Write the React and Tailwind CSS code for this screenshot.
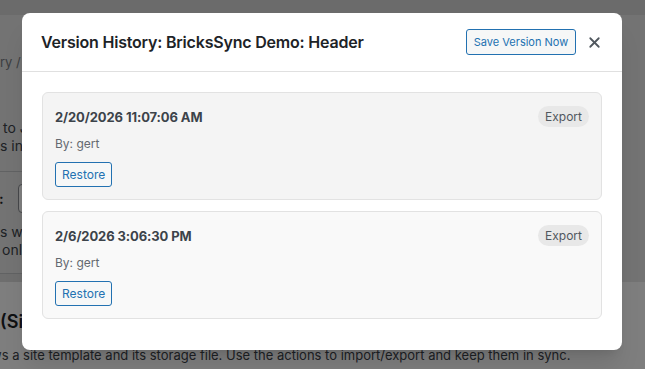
import { X } from 'lucide-react'

const versions = [
  { date: '2/20/2026 11:07:06 AM', user: 'gert', bg: 'bg-[#f4f4f4]' },
  { date: '2/6/2026 3:06:30 PM', user: 'gert', bg: 'bg-[#f9f9f9]' },
]

// text line whose visible part starts at a fixed x; the start of the sentence runs off the left edge
function CutLine({ prefix, rest, edge, className }) {
  return (
    <p className={`ml-[-300px] whitespace-nowrap ${className}`}>
      <span className="inline-block text-right" style={{ width: 300 + edge }}>
        {prefix}
      </span>
      {rest}
    </p>
  )
}

function VersionCard({ version }) {
  return (
    <div className={`${version.bg} border border-[#e2e2e2] rounded-md pl-[12px] pr-[12px] pt-[12px] pb-[12px]`}>
      <div className="flex items-center justify-between">
        <p className="text-[13px] leading-[22px] font-bold text-[#3c434a] mt-[1px] tracking-[-0.1px]">{version.date}</p>
        <span className="h-[21px] px-[7px] rounded-full bg-[#e8e8e8] text-[12px] leading-[21px] text-[#50575e]">
          Export
        </span>
      </div>
      <p className="mt-[7px] text-[12px] leading-[18px] text-[#646970]">By: {version.user}</p>
      <button className="mt-[9px] h-[25px] px-[6px] border border-[#2271b1] rounded-[3px] text-[12px] text-[#2271b1] bg-[#f6f7f7]">
        Restore
      </button>
    </div>
  )
}

export default function App() {
  return (
    <div className="relative w-[645px] h-[369px] overflow-hidden bg-[#e6e6e6] font-['Inter',sans-serif]">
      {/* Background admin page */}
      <div className="h-[15px] bg-[#d6d6d6]" />
      <div className="w-[600px]">
        <CutLine
          prefix="Libra"
          rest="ry / Templates"
          edge={0}
          className="mt-[38px] text-[13px] leading-[18px] text-[#787c82]"
        />
        <div className="mt-[48px] text-[14px] leading-[18px] text-[#3c434a]">
          <CutLine prefix={'Sync Bricks templates\u00a0'} rest="to JSON files" edge={3} />
          <CutLine prefix="and keep the template" rest="s in sync" edge={0} />
        </div>
        <div className="mt-[16px] border-t border-[#c3c4c7]" />
        <div className="mt-[12px] flex items-center">
          <CutLine prefix="Storage folder" rest=":" edge={-1} className="text-[14px] font-bold text-[#1d2327]" />
          <div className="ml-[14px] w-[220px] h-[29px] border border-[#8c8f94] rounded-[4px] bg-white" />
        </div>
        <div className="mt-[10px] text-[14px] leading-[18px] text-[#3c434a]">
          <CutLine prefix="Choose the folder" rest="s where the JSON files are stored" edge={0} />
          <CutLine prefix={'Visible to administrators\u00a0'} rest="only." edge={2} />
        </div>
        <div className="mt-[14px] h-[9px] border-t border-[#c3c4c7] bg-[#dcdcdc]" />
      </div>
      <div className="bg-[#fdfdfd] h-[100px] pt-[28px]">
        <CutLine
          prefix={'Templates\u00a0'}
          rest="(Site Templates)"
          edge={0}
          className="text-[18px] leading-[24px] font-semibold text-[#1d2327]"
        />
        <CutLine
          prefix="Sho"
          rest="ws a site template and its storage file. Use the actions to import/export and keep them in sync."
          edge={-9}
          className="mt-[12px] text-[13px] leading-[18px] text-[#3c434a]"
        />
      </div>

      {/* Overlay */}
      <div className="absolute inset-0 bg-black/50">
        <div className="mt-[13px] ml-[22px] w-[600px] bg-white rounded-[8px] shadow-xl">
          <div className="h-[59px] flex items-center justify-between pl-[19px] pr-[19px] border-b border-[#e0e0e0]">
            <h2 className="text-[16px] font-semibold text-[#1d2327] tracking-[-0.2px]">
              Version History: BricksSync Demo: Header
            </h2>
            <div className="flex items-center gap-[10px]">
              <button className="h-[26px] w-[110px] border border-[#2271b1] rounded-[3px] text-[11px] text-[#2271b1] bg-[#f6f7f7]">
                Save Version Now
              </button>
              <X size={17} strokeWidth={2.5} className="text-[#50575e]" />
            </div>
          </div>
          <div className="px-[20px] pt-[20px] pb-[31px] flex flex-col gap-[11px]">
            {versions.map((v) => (
              <VersionCard key={v.date} version={v} />
            ))}
          </div>
        </div>
      </div>
    </div>
  )
}
